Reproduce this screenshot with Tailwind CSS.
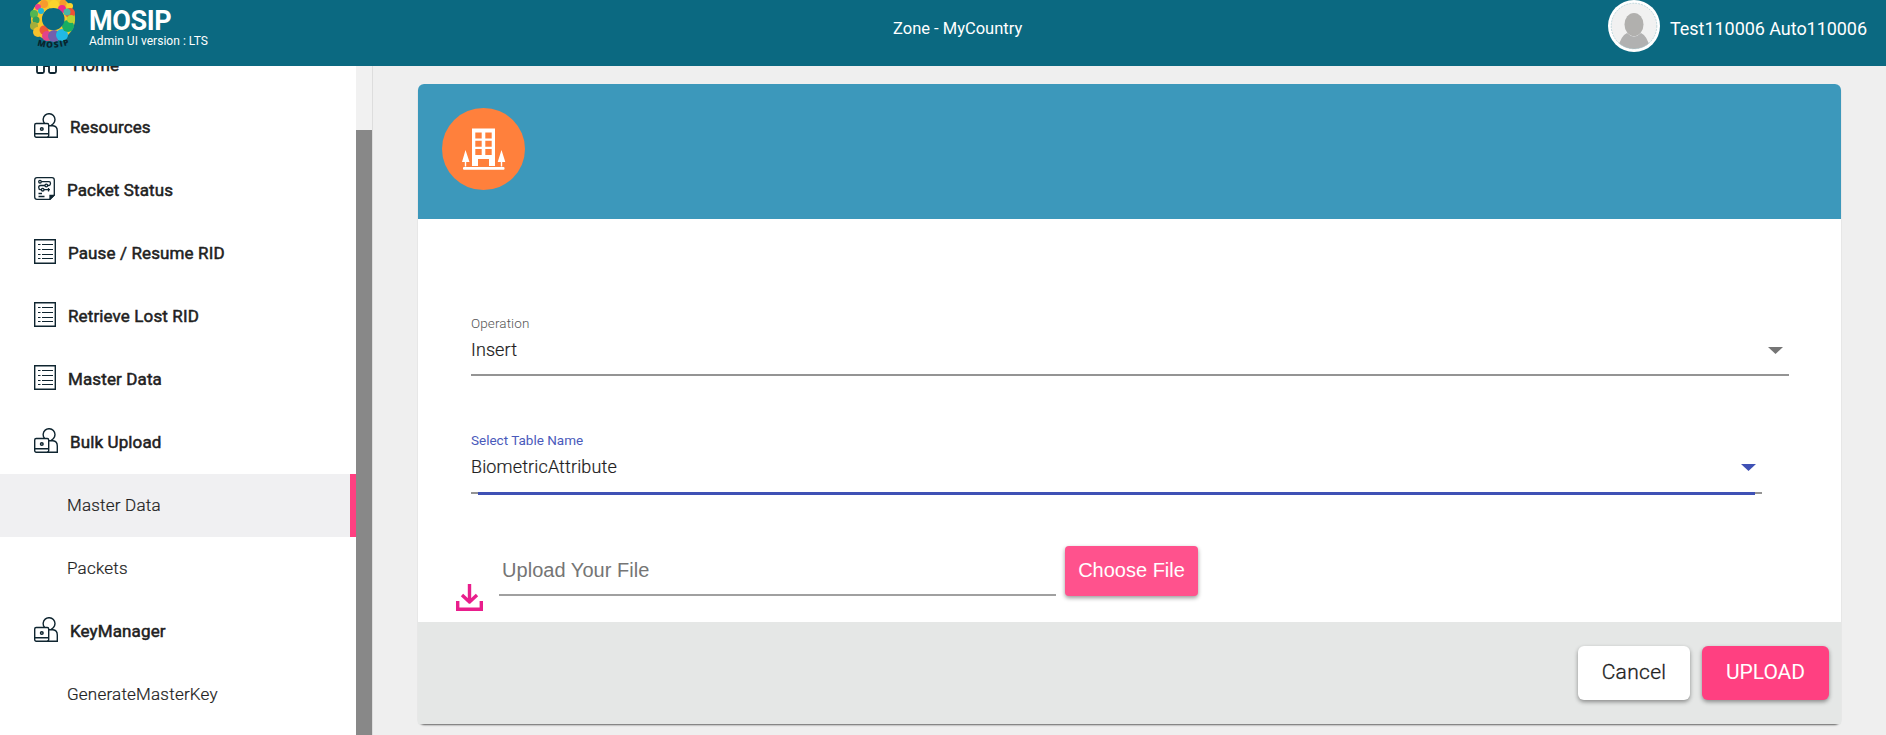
<!DOCTYPE html>
<html lang="en">
<head>
<meta charset="utf-8">
<title>MOSIP Admin</title>
<script src="https://cdn.jsdelivr.net/npm/@tailwindcss/browser@4"></script>
</head>
<body class="h-[735px] overflow-hidden bg-[#efefef] font-[Roboto,sans-serif] text-[#212121]">
<svg class="hidden">
  <symbol id="person" viewBox="0 0 24 25"><g fill="none" stroke="#0f2530" stroke-width="1.4"><path d="M10.500 10.300A5.900 5.900 0 1 1 19.300 10.700Q18.500 11.800 17 12.300"/><rect x=".7" y="10.500" width="14" height="13.700" rx="1.500"/><path d="M.7 20.800H14.600M14.600 12.700H19Q23.300 13 23.300 18V24.200H13"/><circle cx="7.800" cy="16" r="1.300" stroke-width="1.500"/></g></symbol>
  <symbol id="list" viewBox="0 0 22 25"><path d="M.7.7H21.300V24.300H.7Z" fill="none" stroke="#0f2530" stroke-width="1.400"/><path d="M4 5.500H6.500M8 5.500H19M4 10.500H6.500M8 10.500H19M4 15.500H6.500M8 15.500H19M4 19.500H6.500M8 19.500H19" stroke="#0f2530" stroke-width="1.200"/></symbol>
</svg>
<header class="flex h-[66px] items-start bg-[#0b6981] text-white">
  <svg class="ml-[29px] h-[50px] w-[48px] shrink-0" viewBox="29 0 48 50">
    <circle cx="53" cy="19" r="16.500" fill="none" stroke="#f5c72c" stroke-width="11"/>
    <g>
      <circle cx="44" cy="4" r="4" fill="#f79a2d"/><circle cx="38" cy="7" r="3" fill="#ec3d8d"/><circle cx="54" cy="5" r="5" fill="#fbd42c"/><circle cx="63" cy="3" r="3.500" fill="#f79a2d"/><circle cx="62" cy="9" r="4" fill="#ee2a8b"/><circle cx="70" cy="6" r="3" fill="#fbd42c"/><circle cx="70" cy="13" r="5" fill="#ef5136"/><circle cx="67" cy="12" r="3.500" fill="#4bb6a6"/>
      <circle cx="34" cy="14" r="4" fill="#52b652"/><circle cx="41" cy="11" r="3" fill="#22b6d9"/><circle cx="36" cy="20" r="3.500" fill="#2f9c5c"/><circle cx="34" cy="26" r="4" fill="#a4ad3b"/><circle cx="38" cy="32" r="5" fill="#f6c12d"/><circle cx="44" cy="30" r="4.500" fill="#ee5737"/><circle cx="47" cy="36" r="5" fill="#e2438c"/><circle cx="54" cy="36" r="6" fill="#7460ad"/><circle cx="62" cy="35" r="6" fill="#21b9e5"/><circle cx="68" cy="26" r="6" fill="#17ae63"/><circle cx="71" cy="19" r="4" fill="#b6d532"/>
    </g>
    <circle cx="53.500" cy="19" r="11" fill="#0b6981"/>
    <path id="logo-arc" d="M36 45Q53 51 71 44" fill="none"/>
    <text font-family="Open Sans" font-weight="800" font-size="8.500" fill="#08242d"><textPath href="#logo-arc" startOffset="1" textLength="33">MOSIP</textPath></text>
  </svg>
  <div class="ml-[12px] w-[300px] pt-[7px]">
    <div class="text-[27px] leading-[28px] font-bold tracking-[-0.400px]">MOSIP</div>
    <div class="text-[12px] leading-[12px] tracking-[0.030px]">Admin UI version : LTS</div>
  </div>
  <div class="ml-[504px] w-[200px] pt-[18px] text-[16.500px] leading-[21px]">Zone - MyCountry</div>
  <div class="ml-auto flex pr-[19px]">
    <svg class="h-[52px] w-[52px]" viewBox="0 0 52 52"><circle cx="26" cy="26" r="26" fill="#fff"/><clipPath id="av"><circle cx="26" cy="26" r="23"/></clipPath><g clip-path="url(#av)"><circle cx="26" cy="26" r="23" fill="#f1f1f1"/><path d="M9 52Q12 36 19 33Q26 40 33 33Q40 36 43 52Z" fill="#b1b1b1"/><ellipse cx="26" cy="24.500" rx="9.500" ry="11.500" fill="#b1b0ae"/></g><circle cx="26" cy="26" r="22.800" fill="none" stroke="#9cc3cd" stroke-width=".6" stroke-dasharray="2 1"/></svg>
    <div class="ml-[10px] pt-[18px] text-[18px] leading-[22px] tracking-[-0.050px] whitespace-nowrap">Test110006 Auto110006</div>
  </div>
</header>
<div class="flex h-[669px]">
  <nav class="h-full w-[356px] shrink-0 overflow-hidden bg-white">
    <ul class="-mt-[33px] text-[17px]">
      <li class="flex h-[63px] items-center pl-[36px]"><svg class="-mt-[3px] h-[22px] w-[21px]" viewBox="0 0 21 22" fill="none" stroke="#0f2530" stroke-width="1.800"><path d="M1 8V19.500Q1 21 2 21H6.500Q8 21 8 19.500V14H13V19.500Q13 21 14.500 21H18.500Q20 21 20 19.500V8L10.500 1Z"/></svg><span class="ml-[16px] pt-[2px] tracking-[0.120px] [-webkit-text-stroke:0.5px_#212121]">Home</span></li>
      <li class="flex h-[63px] items-center pl-[34px]"><svg class="-mt-[4px] h-[25px] w-[24px]"><use href="#person"/></svg><span class="ml-[12px] pt-px tracking-[0.120px] [-webkit-text-stroke:0.5px_#212121]">Resources</span></li>
      <li class="flex h-[63px] items-center pl-[34px]"><svg class="-mt-[4px] h-[23px] w-[21px]" viewBox="0 0 21 23" fill="none" stroke="#0f2530" stroke-width="1.300"><path d="M3 .7H18Q20.300.7 20.300 3V18L16 22.300H3Q.7 22.300.7 20V3Q.7.7 3 .7Z"/><path d="M16 22V18.300H20Z" fill="#0f2530"/><circle cx="6" cy="4.700" r="1.300"/><path d="M7.300 4.700H15Q16.500 4.700 16.500 6.500T15 8.500H13.500M11 8.500H6.500Q4.700 8.500 4.700 10.500T6.500 12.700H7.500M10 12.700H16M14.500 11V14.500M4.500 16.500H8M4.500 19.500H10.500"/><circle cx="12.300" cy="8.500" r="1.300"/><circle cx="8.700" cy="12.700" r="1.300"/></svg><span class="ml-[12px] pt-px tracking-[0.120px] [-webkit-text-stroke:0.5px_#212121]">Packet Status</span></li>
      <li class="flex h-[63px] items-center pl-[34px]"><svg class="-mt-[4px] h-[25px] w-[22px]"><use href="#list"/></svg><span class="ml-[12px] pt-px tracking-[0.120px] [-webkit-text-stroke:0.5px_#212121]">Pause / Resume RID</span></li>
      <li class="flex h-[63px] items-center pl-[34px]"><svg class="-mt-[4px] h-[25px] w-[22px]"><use href="#list"/></svg><span class="ml-[12px] pt-px tracking-[0.120px] [-webkit-text-stroke:0.5px_#212121]">Retrieve Lost RID</span></li>
      <li class="flex h-[63px] items-center pl-[34px]"><svg class="-mt-[4px] h-[25px] w-[22px]"><use href="#list"/></svg><span class="ml-[12px] pt-px tracking-[0.120px] [-webkit-text-stroke:0.5px_#212121]">Master Data</span></li>
      <li class="flex h-[63px] items-center pl-[34px]"><svg class="-mt-[4px] h-[25px] w-[24px]"><use href="#person"/></svg><span class="ml-[12px] pt-px tracking-[0.120px] [-webkit-text-stroke:0.5px_#212121]">Bulk Upload</span></li>
      <li class="flex h-[63px] items-center border-r-[6px] border-[#ff4081] bg-[#f0f0f2] pl-[67px] font-light tracking-[0.220px] [-webkit-text-stroke:0.2px_#212121]"><span>Master Data</span></li>
      <li class="flex h-[63px] items-center pl-[67px] font-light tracking-[0.220px] [-webkit-text-stroke:0.2px_#212121]"><span>Packets</span></li>
      <li class="flex h-[63px] items-center pl-[34px]"><svg class="-mt-[4px] h-[25px] w-[24px]"><use href="#person"/></svg><span class="ml-[12px] pt-px tracking-[0.120px] [-webkit-text-stroke:0.5px_#212121]">KeyManager</span></li>
      <li class="flex h-[63px] items-center pl-[67px] font-light tracking-[0.220px] [-webkit-text-stroke:0.2px_#212121]"><span>GenerateMasterKey</span></li>
    </ul>
  </nav>
  <div class="w-[17px] shrink-0 border-r border-[#dddddd] bg-[#f1f1f1] pt-[64px]"><div class="h-full bg-[#888888]"></div></div>
  <main class="flex-1 pt-[18px] pl-[45px]">
    <section class="flex h-[640px] w-[1423px] flex-col rounded-[6px] bg-white shadow-[0_2px_2px_-1px_rgba(0,0,0,0.6)]">
      <div class="h-[135px] rounded-t-[6px] bg-[#3c98bb] pt-[24px] pl-[24px]">
        <svg class="h-[82px] w-[83px]" viewBox="0 0 83 82"><ellipse cx="41.500" cy="41" rx="41.500" ry="41" fill="#ff803c"/><g fill="#fff"><path fill-rule="evenodd" d="M31 20.500H54V58H48V51H37V58H31ZM34.300 24.500V30.500H40.700V24.500ZM44.300 24.500V30.500H50.700V24.500ZM34.300 32.700V38.700H40.700V32.700ZM44.300 32.700V38.700H50.700V32.700ZM34.300 41V47H40.700V41ZM44.300 41V47H50.700V41Z" transform="translate(-1)"/><rect x="21" y="59" width="41.500" height="2.800" rx="1"/><path d="M23.500 42L27.500 54H24.200V58.500H22.800V54H20ZM59.500 42L63.300 54H60.200V58.500H58.800V54H55.700Z"/></g></svg>
      </div>
      <div class="flex-1 pt-[96px] pl-[53px]">
        <div class="h-[61px] w-[1318px] border-b-2 border-[#949494]">
          <div class="text-[13.500px] leading-[16px] font-light tracking-[0.100px] text-[#555]">Operation</div>
          <div class="mt-[8px] flex items-center justify-between pr-[6px] text-[18px] leading-[22px] font-light tracking-[0.100px] [-webkit-text-stroke:0.2px_#212121]"><span>Insert</span><svg class="h-[7px] w-[15px]" viewBox="0 0 15 7"><path d="M0 0H15L7.500 7Z" fill="#757575"/></svg></div>
        </div>
        <div class="mt-[56px] h-[61px] w-[1291px]">
          <div class="text-[13.500px] leading-[16px] text-[#4a5abb]">Select Table Name</div>
          <div class="mt-[8px] flex h-[22px] items-center justify-between pr-[6px] text-[18px] leading-[22px] font-light tracking-[0.140px] [-webkit-text-stroke:0.2px_#212121]"><span>BiometricAttribute</span><svg class="h-[7px] w-[15px]" viewBox="0 0 15 7"><path d="M0 0H15L7.500 7Z" fill="#3f51b5"/></svg></div>
          <div class="mt-[14px] h-[2px] bg-[#949494] px-[7px]"><div class="h-[3px] bg-[#3f51b5]"></div></div>
        </div>
        <div class="-ml-[15px] mt-[53px] flex h-[66px] items-start font-['Liberation_Sans',Arial,sans-serif] text-[20px]">
          <svg class="mt-[38px] h-[27px] w-[27px]" viewBox="0 0 27 27" fill="none" stroke="#e91e8c" stroke-width="3.400"><path d="M13.500 0V18M6 11L13.500 18L21 11" stroke-linejoin="round"/><path d="M1.700 17V25.300H25.300V17"/></svg>
          <div class="ml-[16px] h-[50px] w-[557px] border-b-2 border-[#a0a0a0] pt-[13px] pl-[3px] leading-[22px] tracking-[0.040px] text-[#757575]">Upload Your File</div>
          <div class="ml-[9px] flex h-[50px] w-[133px] items-center justify-center rounded-[4px] bg-[#ff528d] pb-[2px] text-white shadow-[0_2px_4px_rgba(0,0,0,0.4)]">Choose File</div>
        </div>
      </div>
      <div class="flex h-[102px] justify-end gap-[12px] bg-[#e5e7e6] pt-[24px] pr-[12px] text-[21px]">
        <div class="flex h-[54px] w-[112px] items-center justify-center rounded-[6px] bg-white pb-px font-light tracking-[0.300px] shadow-[0_2px_4px_rgba(0,0,0,0.4)] [-webkit-text-stroke:0.3px_#212121]">Cancel</div>
        <div class="flex h-[54px] w-[127px] items-center justify-center rounded-[6px] bg-[#ff4081] pb-px text-white shadow-[0_2px_4px_rgba(0,0,0,0.4)]">UPLOAD</div>
      </div>
    </section>
  </main>
</div>
</body>
</html>
